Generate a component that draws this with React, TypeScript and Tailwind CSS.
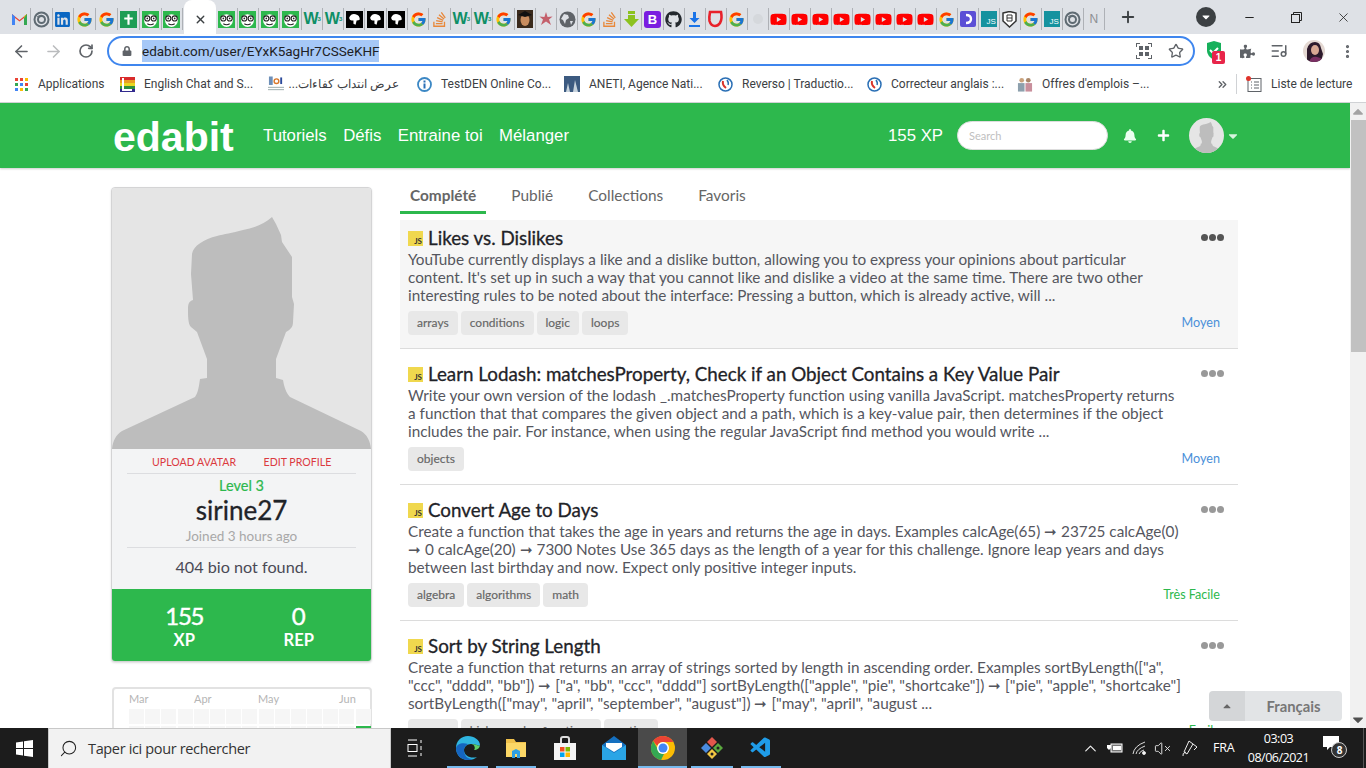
import React from "react";
import { ArrowLeft, ArrowRight, RotateCw, Star, X, Plus, Minus, ChevronUp, ChevronsRight, Search, VolumeX, EllipsisVertical, ListMusic } from "lucide-react";
import { FcGoogle } from "react-icons/fc";
import { FaGithub, FaStackOverflow, FaLinkedin, FaPuzzlePiece, FaBell, FaPlus, FaLock, FaYoutube, FaCaretDown, FaCaretUp } from "react-icons/fa";
import { VscVscode } from "react-icons/vsc";

const G = () => <FcGoogle size={17} />;
const Nerd = () => (
  <svg width="17" height="17" viewBox="0 0 16 16">
    <rect width="16" height="16" fill="#2db84d" />
    <ellipse cx="8" cy="9" rx="6" ry="6" fill="#fff" />
    <circle cx="5" cy="7" r="2.4" fill="#fff" stroke="#222" />
    <circle cx="11" cy="7" r="2.4" fill="#fff" stroke="#222" />
    <circle cx="5" cy="7" r=".8" fill="#222" /><circle cx="11" cy="7" r=".8" fill="#222" />
    <path d="M5 12q3 2 6 0" stroke="#222" fill="none" />
  </svg>
);
const Gmail = () => (
  <svg width="17" height="14" viewBox="0 0 17 14">
    <path d="M1 13V2l7.500 6L16 2v11h-3V6L8.500 9.600 4 6v7z" fill="#ea4335" />
    <path d="M1 13V2l3 2.400V13z" fill="#4285f4" /><path d="M13 13V4.400L16 2v11z" fill="#34a853" />
    <path d="M13 4.400 16 2v0l-3 4z" fill="#fbbc04" />
  </svg>
);
const Swirl = () => (
  <svg width="17" height="17" viewBox="0 0 17 17" fill="none" stroke="#5f6b73">
    <circle cx="8.500" cy="8.500" r="7" strokeWidth="2" />
    <circle cx="8.500" cy="8.500" r="3.500" strokeWidth="2" /><path d="M4 6q5-4 8 1" strokeWidth="1" />
  </svg>
);
const Wcube = () => <span className="text-[16px] font-bold text-[#0f8f66] leading-none font-['Liberation_Sans',sans-serif] tracking-[-1px]">W<sup className="text-[6px]">3</sup></span>;
const Blob = () => (
  <svg width="17" height="17" viewBox="0 0 16 16"><rect width="16" height="16" fill="#000" /><path d="M3 6q2-4 6-3 4 1 4 5-1 1-3 1l-1 4-2-1 0-3q-4 0-4-3z" fill="#fff" /></svg>
);
const Face = () => (
  <svg width="16" height="18" viewBox="0 0 16 18"><rect width="16" height="18" fill="#3a2a1c" /><ellipse cx="8" cy="10" rx="4.500" ry="6" fill="#c98d5f" /><path d="M1 5l7-4 7 4-7 2z" fill="#111" /></svg>
);
const Flower = () => (
  <svg width="14" height="14" viewBox="0 0 14 14" fill="#c4606c"><path d="M7 0l1.600 5 5-.500-3.600 3 2 5.500L7 9.500 2 13l2-5.500L.4 4.500l5 .5z" /></svg>
);
const Globe = () => (
  <svg width="17" height="17" viewBox="0 0 17 17"><circle cx="8.500" cy="8.500" r="8" fill="#5f6368" /><path d="M5 3l4 1 1 3-3 2-1 4-2-4-2-1zM11 10l3 0-2 4z" fill="#dee1e6" /></svg>
);
const DownGreen = () => (
  <svg width="17" height="17" viewBox="0 0 17 17" fill="#8cc21f"><path d="M5 0h7v3H5zM5 4h7v4h4l-7.500 8L1 8h4z" /></svg>
);
const Boot = () => <span className="w-[17px] h-[17px] rounded-[3px] bg-[#7a1de0] text-white text-[13px] font-bold leading-[17px] text-center font-['Liberation_Sans',sans-serif]">B</span>;
const Dl = () => (
  <svg width="13" height="15" viewBox="0 0 13 15" fill="#1a73e8"><path d="M5 0h3v6h3.500L6.500 11 1.500 6H5zM1 13h11v2H1z" /></svg>
);
const RedShield = () => (
  <svg width="17" height="18" viewBox="0 0 17 18" fill="none"><path d="M3 2h11q1.500 7-1 11-2 3-5 3-4 0-5.500-5Q2 7 3 2z" stroke="#e8212a" strokeWidth="2.600" /></svg>
);
const Yt = () => <FaYoutube size={17} color="#f00" />;
const DIcon = () => (
  <svg width="16" height="16" viewBox="0 0 16 16"><rect width="16" height="16" rx="2" fill="#5b4fd6" /><path d="M6 4q5 0 5 4t-5 4" stroke="#fff" strokeWidth="2.400" fill="none" /></svg>
);
const JsT = () => <span className="w-[16px] h-[16px] bg-[#15929f] text-white text-[8px] leading-none flex items-end justify-end pr-px pb-px font-['Liberation_Sans',sans-serif]">JS</span>;
const BShield = () => (
  <svg width="15" height="17" viewBox="0 0 15 17"><path d="M1 2l6.500-1.500L14 2v8l-6.500 6L1 10z" fill="#fff" stroke="#333" strokeWidth="1.500" /><path d="M5 4h5v6H5zM5 7h5" stroke="#333" fill="none" /></svg>
);
const FadedN = () => <span className="text-[12px] leading-none text-[#8d8f93] font-['Liberation_Sans',sans-serif]">N</span>;
const FadedDot = () => <span className="w-[10px] h-[10px] rounded-full bg-[#d5d8dc]" />;
const Stack = () => <FaStackOverflow size={17} color="#e8883a" />;
const Cross = () => (
  <svg width="17" height="17" viewBox="0 0 16 16"><rect width="16" height="16" fill="#1f9d55" /><path d="M7 3h2v3h3v2H9v5H7V8H4V6h3z" fill="#fff" /></svg>
);
const Li = () => <FaLinkedin size={17} color="#0a66c2" />;
function FaGithubIcon() { return <FaGithub size={17} color="#24292e" />; }

const leftTabs = [Gmail, Swirl, Li, G, G, Cross, Nerd, Nerd];
const midTabs = [Nerd, Nerd, Nerd, Nerd, Wcube, Wcube, Blob, Blob, Blob, G, Stack, Wcube, Wcube, G, Face, Flower, Globe, G, Stack, DownGreen, Boot, FaGithubIcon];
const rightTabs: (() => React.ReactElement | null)[] = [Dl, RedShield, G, FadedDot, Yt, Yt, Yt, Yt, Yt, Yt, Yt, Yt, G, DIcon, JsT, BShield, G, JsT, Swirl, FadedN];

function TabCell({ I, w }: { I: () => React.ReactElement | null; w: string }) {
  return (
    <div className={`${w} h-[22px] flex items-center justify-center border-r border-[#aeb1b6] shrink-0`}>
      <I />
    </div>
  );
}

function TabStrip() {
  return (
    <div className="h-[34px] bg-[#dee1e6] flex items-end pl-[9px] shrink-0 relative">
      <div className="flex items-center h-[34px] pt-1">
        {leftTabs.map((I, i) => <TabCell key={i} I={I} w="w-[21.800px]" />)}
      </div>
      <div className="w-[32px] h-[34px] ml-px bg-white rounded-t-lg flex items-center justify-center pt-1 shrink-0">
        <X size={13} color="#3c4043" strokeWidth={2.500} />
      </div>
      <div className="flex items-center h-[34px] pt-1">
        {midTabs.map((I, i) => <TabCell key={i} I={I} w="w-[21.300px]" />)}
        {rightTabs.map((I, i) => <TabCell key={i} I={I} w="w-[21px]" />)}
      </div>
      <Plus size={18} color="#3c4043" strokeWidth={2.500} className="ml-[14px] mb-[8px] shrink-0" />
      <div className="ml-[59px] mb-[7px] w-[20px] h-[20px] rounded-full bg-[#3c4043] flex items-center justify-center shrink-0">
        <FaCaretDown size={12} color="#fff" />
      </div>
      <div className="ml-[27px] flex items-center mb-[9px] shrink-0">
        <Minus size={13} color="#222" />
        <svg width="11" height="11" viewBox="0 0 11 11" fill="none" stroke="#222" className="ml-[35px] shrink-0"><rect x=".5" y="2.500" width="8" height="8" /><path d="M2.500 2.500v-2h8v8h-2" /></svg>
        <X size={15} color="#222" strokeWidth={1.300} className="ml-[34px] shrink-0" />
      </div>
    </div>
  );
}

function Toolbar() {
  return (
    <div className="h-[35px] bg-white flex items-center shrink-0 pb-[1px]">
      <ArrowLeft size={19} color="#5f6368" className="ml-[12px]" />
      <ArrowRight size={19} color="#babcbe" className="ml-[13px]" />
      <RotateCw size={16} color="#5f6368" strokeWidth={2.500} className="ml-[15px]" />
      <div className="ml-[13px] w-[1088px] h-[30px] rounded-full border-2 border-[#3f86ee] flex items-center pl-[13px] pr-[9px]">
        <FaLock size={10} color="#5f6368" />
        <span className="ml-[10px] bg-[#a6c8f7] h-[22px] leading-[22px] text-[13.500px] text-[#202124] font-['Roboto',sans-serif] w-[237px] whitespace-nowrap">edabit.com/user/EYxK5agHr7CSSeKHF</span>
        <div className="ml-auto flex items-center gap-[16px]">
          <svg width="16" height="16" viewBox="0 0 16 16" fill="#5f6368">
            <path d="M0 4V0h4v1H1v3zM12 0h4v4h-1V1h-3zM0 12h1v3h3v1H0zM15 12h1v4h-4v-1h3z" />
            <rect x="3" y="3" width="4" height="4" /><rect x="9" y="3" width="4" height="4" /><rect x="3" y="9" width="4" height="4" /><rect x="9" y="9" width="4" height="4" />
          </svg>
          <Star size={16} color="#5f6368" strokeWidth={2} />
        </div>
      </div>
      <div className="ml-[11px] relative w-[18px] h-[20px]">
        <svg width="16" height="19" viewBox="0 0 16 19"><path d="M1 2l7-2 7 2v8q0 5-7 9-7-4-7-9z" fill="#16b05b" /><path d="M4 9l3 3 5-5" stroke="#fff" strokeWidth="2" fill="none" /></svg>
        <span className="absolute left-[6px] top-[10px] w-[13px] h-[13px] rounded-[2px] bg-[#e8254a] text-white text-[10px] font-bold leading-[13px] text-center font-['Liberation_Sans',sans-serif]">1</span>
      </div>
      <FaPuzzlePiece size={15} color="#5f6368" className="ml-[16px]" />
      <ListMusic size={18} color="#5f6368" className="ml-[15px]" />
      <svg width="22" height="22" viewBox="0 0 22 22" className="ml-[15px] rounded-full">
        <rect width="22" height="22" fill="#e4d8d2" /><path d="M4 22V9q2-7 8-7 5 0 6 6l2 6-2 8z" fill="#2d1a2c" /><ellipse cx="12" cy="10" rx="4" ry="5" fill="#d8a793" /><path d="M6 22q2-6 8-5t6 5z" fill="#7a2f63" />
      </svg>
      <EllipsisVertical size={17} color="#5f6368" strokeWidth={2.500} className="ml-[14px]" />
    </div>
  );
}

const Apps = () => (
  <svg width="13" height="13" viewBox="0 0 13 13">
    {[["#ea4335", "#ea4335", "#fbbc04"], ["#34a853", "#4285f4", "#ea4335"], ["#4285f4", "#fbbc04", "#34a853"]].map((r, y) =>
      r.map((c, x) => <rect key={x + "" + y} x={x * 5} y={y * 5} width="3" height="3" fill={c} />))}
  </svg>
);
const Rev = () => (
  <svg width="15" height="15" viewBox="0 0 15 15" fill="none"><circle cx="7.500" cy="7.500" r="6.500" stroke="#2a6fb5" strokeWidth="1.500" /><path d="M5 4q-1 4 3 7" stroke="#d9342b" strokeWidth="2" /><path d="M9 3q2 3 1 5" stroke="#2a6fb5" strokeWidth="1.500" /></svg>
);
const Lgbt = () => (
  <svg width="15" height="15" viewBox="0 0 15 15"><rect width="15" height="3" fill="#d92b2b" /><rect y="3" width="15" height="3" fill="#e8a020" /><rect y="6" width="15" height="3" fill="#e8d820" /><rect y="9" width="15" height="3" fill="#2f8f3c" /><rect y="12" width="15" height="3" fill="#322b8f" /><path d="M3 1v12h9" stroke="#fff" strokeWidth="2" fill="none" /></svg>
);
const Atct = () => (
  <svg width="17" height="17" viewBox="0 0 17 17"><rect x="1" y="0" width="4" height="9" fill="#6d8fb8" /><rect x="0" y="11" width="17" height="1" fill="#9aa" /><rect x="0" y="13.500" width="17" height="1" fill="#9aa" /><circle cx="9" cy="5" r="2.500" fill="none" stroke="#d9782b" strokeWidth="1.500" /><rect x="13" y="1" width="2" height="7" fill="#2b4a9a" /></svg>
);
const Info = () => (
  <svg width="15" height="15" viewBox="0 0 15 15"><circle cx="7.500" cy="7.500" r="6.500" fill="#fff" stroke="#3b87c4" strokeWidth="1.800" /><rect x="6.500" y="6.500" width="2" height="5" fill="#2a6fb5" /><rect x="6.500" y="3.500" width="2" height="2" fill="#2a6fb5" /></svg>
);
const Aneti = () => (
  <svg width="16" height="16" viewBox="0 0 16 16"><rect width="16" height="16" fill="#3c5a80" /><path d="M2 16l2-9 2 9zM9 16l2-12 3 12z" fill="#c6d2dc" /></svg>
);
const People = () => (
  <svg width="17" height="17" viewBox="0 0 17 17"><circle cx="5" cy="4" r="2.500" fill="#c9a27c" /><circle cx="12" cy="4" r="2.500" fill="#a9876a" /><rect x="1" y="7" width="7" height="9" fill="#8da0ad" /><rect x="9" y="7" width="7" height="9" fill="#c88f9c" /></svg>
);

function BM({ icon, text, w, rtl }: { icon: React.ReactNode; text: string; w: string; rtl?: boolean }) {
  return (
    <div className={`flex items-center shrink-0 ${w}`}>
      <span className="w-4 h-4 flex items-center justify-center shrink-0">{icon}</span>
      {rtl
        ? <span dir="rtl" className="ml-[8px] w-[107px] whitespace-nowrap text-right">{text}</span>
        : <span className="ml-[9px] whitespace-nowrap">{text}</span>}
    </div>
  );
}

function Bookmarks() {
  return (
    <div className="h-[34px] bg-white border-b border-[#d0d2d5] flex items-center text-[12px] text-[#3c4043] font-['Roboto',sans-serif] shrink-0 pl-[13px] pb-[3px]">
      <BM icon={<Apps />} text="Applications" w="w-[106px]" />
      <BM icon={<Lgbt />} text="English Chat and S..." w="w-[149px]" />
      <BM icon={<Atct />} text="عرض انتداب كفاءات..." w="w-[148px]" rtl />
      <BM icon={<Info />} text="TestDEN Online Co..." w="w-[148px]" />
      <BM icon={<Aneti />} text="ANETI, Agence Nati..." w="w-[153px]" />
      <BM icon={<Rev />} text="Reverso | Traductio..." w="w-[149px]" />
      <BM icon={<Rev />} text="Correcteur anglais :..." w="w-[151px]" />
      <BM icon={<People />} text="Offres d'emplois –..." w="w-[199px]" />
      <ChevronsRight size={13} color="#5f6368" strokeWidth={2.500} />
      <span className="ml-[7px] w-px h-[20px] bg-[#d0d2d5]" />
      <span className="ml-[9px]">
        <svg width="16" height="16" viewBox="0 0 16 16" fill="none" stroke="#5f6368"><rect x="2" y="2.500" width="13" height="13" /><path d="M5 6h1M8 6h5M5 9h1M8 9h5M5 12h1M8 12h5" /><circle cx="2.500" cy="2.500" r="2.500" fill="#e0342b" stroke="none" /></svg>
      </span>
      <span className="ml-[9px] whitespace-nowrap">Liste de lecture</span>
    </div>
  );
}

function Silhouette({ className }: { className?: string }) {
  return (
    <svg viewBox="0 0 259 261" className={className} preserveAspectRatio="none">
      <path fill="#bdbdbd" d="M160 29C152 36 142 40 131 42C120 45 112 46 105 48C92 51 81 58 80 66L79 86L81 112C77 113 76 116 76 121C76 128 76 136 79 139L85 144L95 171V190L88 191C87 198 86 205 83 209L10 243C4 247 1 252 0 261H259C258 252 255 247 249 243L178 209C174 205 172 198 171 192L164 190V171L174 144C179 141 181 139 181 134L182 116L180 109V69L170 54L169 47L164 36Z" />
    </svg>
  );
}

function Header() {
  return (
    <div className="h-[65px] bg-[#2db84d] flex items-center shadow-[0_1px_2px_rgba(0,0,0,0.2)] text-white font-['Liberation_Sans',Arial,sans-serif] shrink-0 relative">
      <span className="ml-[113px] w-[122px] text-[41px] font-bold leading-none pt-[4px] whitespace-nowrap">edabit</span>
      <nav className="ml-[28px] flex gap-[16.400px] text-[16.800px] whitespace-nowrap pt-px">
        <span>Tutoriels</span><span>Défis</span><span>Entraine toi</span><span>Mélanger</span>
      </nav>
      <span className="ml-[319px] text-[16.800px] whitespace-nowrap">155 XP</span>
      <div className="ml-[14px] w-[151px] h-[29px] bg-white rounded-full border border-[#ddd] pl-[11px] text-[11px] text-[#c0c0c0] leading-[27px] font-['Lato',sans-serif]">Search</div>
      <FaBell size={14} color="#eafff0" className="ml-[15px]" />
      <FaPlus size={13} color="#fff" className="ml-[20px]" />
      <div className="ml-[19px] w-[35px] h-[35px] rounded-full bg-[#e5e5e5] overflow-hidden">
        <Silhouette className="w-[35px] h-[35px]" />
      </div>
      <FaCaretDown size={14} color="#d6f5de" className="ml-[2px]" />
    </div>
  );
}

function Hr() { return <div className="mx-[15px] h-px bg-[#dcdde0]" />; }

function ProfileCard() {
  return (
    <div className="w-[261px] h-[475px] border border-[#d4d4d5] rounded-[4px] bg-[#f3f4f5] shadow-[0_1px_2px_rgba(34,36,38,0.15)] overflow-hidden flex flex-col text-center">
      <div className="w-[259px] h-[261px] bg-[#e5e5e5] shrink-0"><Silhouette className="w-[259px] h-[261px] block" /></div>
      <div className="h-[24px] flex items-center text-[10.600px] text-[#db3a3f] uppercase whitespace-nowrap pl-[40px] gap-[27.500px] pt-[3px]">
        <span>Upload Avatar</span><span>Edit Profile</span>
      </div>
      <Hr />
      <div className="text-[14.500px] [-webkit-text-stroke:0.2px] text-[#2db84d] leading-[16px] mt-[4px]">Level 3</div>
      <div className="text-[26px] [-webkit-text-stroke:0.3px] text-[#1f2328] leading-[30px] mt-[1px]">sirine27</div>
      <div className="text-[13.500px] text-[#a8a8a8] leading-[16px] mt-[3px]">Joined 3 hours ago</div>
      <div className="mt-[3px]"><Hr /></div>
      <div className="text-[16.200px] text-[#4a4a55] h-[41px] leading-[38px]">404 bio not found.</div>
      <div className="flex-1 bg-[#2db84d] text-white grid grid-cols-2 px-[15px] pt-[12px] font-bold">
        <div><div className="text-[24px] leading-[30px] font-normal [-webkit-text-stroke:0.4px] tracking-[-1.300px]">155</div><div className="text-[16.500px] leading-[15px] mt-[2px]">XP</div></div>
        <div><div className="text-[24px] leading-[30px] font-normal [-webkit-text-stroke:0.4px]">0</div><div className="text-[16.500px] leading-[15px] mt-[2px]">REP</div></div>
      </div>
    </div>
  );
}

function Heatmap() {
  const cells = Array.from({ length: 15 });
  return (
    <div className="mt-[25px] ml-px w-[260px] h-[120px] border-2 border-[#e2e2e2] rounded-[4px] bg-white pl-[15px]">
      <div className="h-[19px] relative text-[11px] text-[#b5b5b5] leading-[20px]">
        <span className="absolute left-0">Mar</span><span className="absolute left-[65px]">Apr</span><span className="absolute left-[129px]">May</span><span className="absolute left-[210px]">Jun</span>
      </div>
      <div className="flex gap-[1.200px] mt-px">{cells.map((_, i) => <div key={i} className="w-[15px] h-[15px] bg-[#f6f6f6] shrink-0" />)}</div>
      <div className="flex gap-[1.200px] mt-[2px]">{cells.map((_, i) => <div key={i} className={`w-[15px] h-[15px] shrink-0 ${i === 14 ? "bg-[#2db84d]" : "bg-[#f6f6f6]"}`} />)}</div>
    </div>
  );
}

type Item = { title: string; lines: string[]; tags: string[]; level: string; levelColor: string; first?: boolean; dots: string };
const items: Item[] = [
  { title: "Likes vs. Dislikes", first: true, dots: "#555", levelColor: "text-[#4a90d9]", level: "Moyen", tags: ["arrays", "conditions", "logic", "loops"], lines: [
    "YouTube currently displays a like and a dislike button, allowing you to express your opinions about particular",
    "content. It's set up in such a way that you cannot like and dislike a video at the same time. There are two other",
    "interesting rules to be noted about the interface: Pressing a button, which is already active, will ...",
  ] },
  { title: "Learn Lodash: matchesProperty, Check if an Object Contains a Key Value Pair", dots: "#999", levelColor: "text-[#4a90d9]", level: "Moyen", tags: ["objects"], lines: [
    "Write your own version of the lodash _.matchesProperty function using vanilla JavaScript. matchesProperty returns",
    "a function that that compares the given object and a path, which is a key-value pair, then determines if the object",
    "includes the pair. For instance, when using the regular JavaScript find method you would write ...",
  ] },
  { title: "Convert Age to Days", dots: "#999", levelColor: "text-[#2db84d]", level: "Très Facile", tags: ["algebra", "algorithms", "math"], lines: [
    "Create a function that takes the age in years and returns the age in days. Examples calcAge(65) ➞ 23725 calcAge(0)",
    "➞ 0 calcAge(20) ➞ 7300 Notes Use 365 days as the length of a year for this challenge. Ignore leap years and days",
    "between last birthday and now. Expect only positive integer inputs.",
  ] },
  { title: "Sort by String Length", dots: "#999", levelColor: "text-[#2db84d]", level: "Facile", tags: ["arrays", "higher_order_functions", "sorting"], lines: [
    "Create a function that returns an array of strings sorted by length in ascending order. Examples sortByLength([\"a\",",
    "\"ccc\", \"dddd\", \"bb\"]) ➞ [\"a\", \"bb\", \"ccc\", \"dddd\"] sortByLength([\"apple\", \"pie\", \"shortcake\"]) ➞ [\"pie\", \"apple\", \"shortcake\"]",
    "sortByLength([\"may\", \"april\", \"september\", \"august\"]) ➞ [\"may\", \"april\", \"august ...",
  ] },
];

function ItemRow({ it }: { it: Item }) {
  return (
    <div className={`border-b border-[#dcdcdc] px-[8px] relative shrink-0 ${it.first ? "h-[129px] pt-[6px] bg-[#f6f6f6]" : "h-[136px] pt-[13px]"}`}>
      <div className="flex items-center h-[24px]">
        <span className="w-[15px] h-[15px] bg-[#f0d84e] text-[#333] text-[8px] font-bold leading-none flex items-end justify-end pr-px pb-px shrink-0">JS</span>
        <span className="ml-[5px] text-[18.800px] [-webkit-text-stroke:0.3px] text-[#1f2328] whitespace-nowrap">{it.title}</span>
      </div>
      <div className="text-[15.300px] leading-[18px] text-[#55565e] whitespace-nowrap">
        {it.lines.map((l, i) => <div key={i}>{l}</div>)}
      </div>
      <div className="mt-[7px] flex gap-[3px]">
        {it.tags.map((t) => <span key={t} className="h-[24px] px-[9px] rounded-[4px] bg-[#e8e8e8] text-[12px] [-webkit-text-stroke:0.15px] text-[#666] leading-[24px] whitespace-nowrap">{t}</span>)}
      </div>
      <span className={`absolute right-[18px] bottom-[15px] text-[12.600px] ${it.levelColor}`}>{it.level}</span>
      <span className="absolute right-[14px] flex gap-px" style={{ top: it.first ? 14 : 21 }}>
        {[0, 1, 2].map((i) => <span key={i} className="w-[7px] h-[7px] rounded-full" style={{ background: it.dots }} />)}
      </span>
    </div>
  );
}

function Content() {
  return (
    <div className="flex pl-[111px] pt-[19px] font-['Lato',sans-serif]">
      <div className="w-[261px] shrink-0">
        <ProfileCard />
        <Heatmap />
      </div>
      <div className="ml-[28px] w-[838px] shrink-0">
        <div className="flex gap-[15px] text-[15.400px] text-[#666] h-[27px]">
          <span className="px-[10px] font-bold border-b-[3px] border-[#2db84d] leading-[17px]">Complété</span>
          <span className="px-[10px] leading-[17px]">Publié</span>
          <span className="px-[10px] leading-[17px]">Collections</span>
          <span className="px-[10px] leading-[17px]">Favoris</span>
        </div>
        <div className="mt-[6px] flex flex-col">
          {items.map((it) => <ItemRow key={it.title} it={it} />)}
        </div>
      </div>
    </div>
  );
}

function Scrollbar() {
  return (
    <div className="w-[16px] bg-[#f1f1f1] flex flex-col items-center shrink-0">
      <FaCaretUp size={12} color="#a3a3a3" className="h-[17px] shrink-0" />
      <div className="w-[15px] h-[232px] bg-[#c1c1c1]" />
      <div className="flex-1" />
      <FaCaretDown size={12} color="#505050" className="h-[17px] shrink-0" />
    </div>
  );
}

const Win = () => (
  <svg width="17" height="17" viewBox="0 0 17 17" fill="#fff"><path d="M0 2.500 7 1.500V8H0zM8 1.300 17 0v8H8zM0 9h7v6.500l-7-1zM8 9h9v8l-9-1.300z" /></svg>
);
const Edge = () => (
  <svg width="24" height="24" viewBox="0 0 24 24"><path d="M12 0C5 0 0 5 0 12c0 7 5 12 12 12 4 0 7-1 9-3-6 2-13-1-13-7 0-3 3-6 7-6 5 0 9 3 9 1C24 4 18 0 12 0z" fill="#2fb5e0" /><path d="M0 12c0 7 5 12 12 12 2 0 3 0 4-1-5 0-8-4-8-9 0-3 2-5 4-6C6 6 1 8 0 12z" fill="#1565c0" /><path d="M15 8c5 0 9 3 9 1 0 3-3 5-6 5 2-2 0-6-3-6z" fill="#5fd068" /></svg>
);
const Folder = () => (
  <svg width="22" height="22" viewBox="0 0 22 22"><path d="M1 2h8l2 3h10v15H1z" fill="#f0c14b" /><rect x="1" y="6" width="20" height="14" fill="#fcd766" /><path d="M7 21v-7l4-2 4 2v7h-3v-4h-2v4z" fill="#2f9fe0" /></svg>
);
const Store = () => (
  <svg width="24" height="24" viewBox="0 0 24 24"><rect x="1" y="7" width="22" height="17" fill="#f4f4f4" /><path d="M8 7V3q0-2 2-2h4q2 0 2 2v4" stroke="#ddd" strokeWidth="2" fill="none" /><rect x="7" y="11" width="4.500" height="4.500" fill="#f25022" /><rect x="12.500" y="11" width="4.500" height="4.500" fill="#7fba00" /><rect x="7" y="16.500" width="4.500" height="4.500" fill="#00a4ef" /><rect x="12.500" y="16.500" width="4.500" height="4.500" fill="#ffb900" /></svg>
);
const Mail = () => (
  <svg width="24" height="24" viewBox="0 0 24 24"><path d="M0 9l12-9 12 9v14H0z" fill="#1570c0" /><path d="M0 9l12 8 12-8v15H0z" fill="#2aa5e6" /><path d="M4 7h16v4l-8 5-8-5z" fill="#fff" /></svg>
);
const Chrome = () => (
  <svg width="24" height="24" viewBox="0 0 24 24"><circle cx="12" cy="12" r="12" fill="#fbbc04" /><path d="M12 0a12 12 0 0 1 10.400 6H12a6 6 0 0 0-5.700 4L2.200 5A12 12 0 0 1 12 0z" fill="#ea4335" /><path d="M2.200 5 7 13.500A6 6 0 0 0 13 18l-3 6A12 12 0 0 1 2.200 5z" fill="#34a853" /><circle cx="12" cy="12" r="6" fill="#fff" /><circle cx="12" cy="12" r="4.500" fill="#4285f4" /></svg>
);
const GitK = () => (
  <svg width="24" height="24" viewBox="0 0 24 24"><path d="M12 1l5 5-5 5-5-5z" fill="#e2574c" /><path d="M1 12l5-5 5 5-5 5z" fill="#4a8be0" /><path d="M13 12l5-5 5 5-5 5z" fill="#5aa83e" /><path d="M12 13l5 5-5 5-5-5z" fill="#f2c744" /><circle cx="18" cy="12" r="1.500" fill="#222" /><circle cx="12" cy="18" r="1.500" fill="#222" /></svg>
);

function TB({ children, on, active, w }: { children: React.ReactNode; on?: boolean; active?: boolean; w: string }) {
  return (
    <div className={`${w} h-full flex items-center justify-center relative shrink-0 ${active ? "bg-[#4a4a4a]" : ""}`}>
      {children}
      {on && <span className={`absolute bottom-0 h-[2px] bg-[#76b9ed] ${active ? "left-0 right-0" : "left-[4px] right-[4px]"}`} />}
    </div>
  );
}

function Taskbar() {
  return (
    <div className="h-[40px] bg-[#1c1c1c] flex items-center text-white shrink-0 font-['Open_Sans',sans-serif]">
      <div className="w-[48px] flex justify-center"><Win /></div>
      <div className="w-[343px] h-full bg-[#f2f2f2] flex items-center pl-[10px] border border-[#c8c8c8] border-b-0">
        <Search size={19} color="#222" strokeWidth={1.300} className="-scale-x-100" />
        <span className="ml-[10px] text-[14.500px] text-[#333] whitespace-nowrap tracking-[-0.35px]">Taper ici pour rechercher</span>
      </div>
      <div className="w-[48px] h-full flex items-center justify-center">
        <svg width="16" height="18" viewBox="0 0 16 18" fill="none" stroke="#fff"><path d="M1 1h9M1 17h9" /><rect x="1" y="5.500" width="9" height="7" /><path d="M14 1v3M14 7v4M14 14v3" /></svg>
      </div>
      <div className="w-[4px]" />
      <TB w="w-[49px]" on><Edge /></TB>
      <TB w="w-[48px]" on><Folder /></TB>
      <TB w="w-[49px]"><Store /></TB>
      <TB w="w-[49px]"><Mail /></TB>
      <TB w="w-[49px]" on active><Chrome /></TB>
      <TB w="w-[50px]" on><GitK /></TB>
      <TB w="w-[48px]" on><VscVscode size={24} color="#1f9ce8" /></TB>
      <ChevronUp size={19} color="#eee" strokeWidth={1.500} className="ml-[296px]" />
      <svg width="17" height="12" viewBox="0 0 17 12" className="ml-[6px]" fill="#fff"><rect x="5" y="2" width="11" height="8" stroke="#fff" fill="#777" /><rect x="7" y="4" width="8" height="4" /><path d="M1 3h4v3l-2 2-2-2z" /></svg>
      <svg width="15" height="14" viewBox="0 0 15 14" className="ml-[9px]" fill="none" stroke="#ddd"><path d="M1 13Q2 5 13 1M4 13Q5 8 13 5M7 13Q8 10 12 9" /><circle cx="12" cy="12" r="1.500" fill="#fff" /></svg>
      <VolumeX size={17} color="#eee" strokeWidth={1.300} className="ml-[7px]" />
      <svg width="17" height="18" viewBox="0 0 17 18" className="ml-[10px]" fill="none" stroke="#eee"><path d="M8 2l4 3-6 10-3-2zM12 5l4 3-3 3M5 13q-4 1-3 4" /></svg>
      <span className="ml-[15px] text-[12.500px] tracking-[-0.2px]">FRA</span>
      <div className="ml-[13px] w-[62px] text-center text-[12.500px] leading-[19px] whitespace-nowrap tracking-[-0.5px]">
        <div>03:03</div><div>08/06/2021</div>
      </div>
      <div className="ml-[14px] relative w-[24px] h-[24px]">
        <svg width="17" height="15" viewBox="0 0 17 15" fill="#fff"><path d="M0 0h16v11H7l-3 3v-3H0z" /></svg>
        <span className="absolute left-[8px] top-[6px] w-[16px] h-[16px] rounded-full bg-[#333] border border-[#ccc] text-[10px] leading-[14px] text-center font-bold">8</span>
      </div>
      <span className="ml-auto mr-[2px] w-px h-full bg-[#555]" />
    </div>
  );
}

export default function App() {
  return (
    <div className="w-[1366px] h-[768px] overflow-hidden flex flex-col bg-white relative">
      <TabStrip />
      <Toolbar />
      <Bookmarks />
      <div className="flex-1 min-h-0 flex relative">
        <div className="flex-1 min-w-0 overflow-hidden">
          <Header />
          <Content />
        </div>
        <Scrollbar />
        <div className="absolute left-[1209px] top-[588px] w-[133px] h-[30px] rounded-[4px] overflow-hidden flex font-['Lato',sans-serif]">
          <div className="w-[36px] bg-[#d4d6d8] flex items-center justify-center"><FaCaretUp size={12} color="#666" /></div>
          <div className="flex-1 bg-[#e2e4e6] text-[14.800px] font-bold text-[#777] flex items-center justify-center">Français</div>
        </div>
      </div>
      <Taskbar />
    </div>
  );
}
